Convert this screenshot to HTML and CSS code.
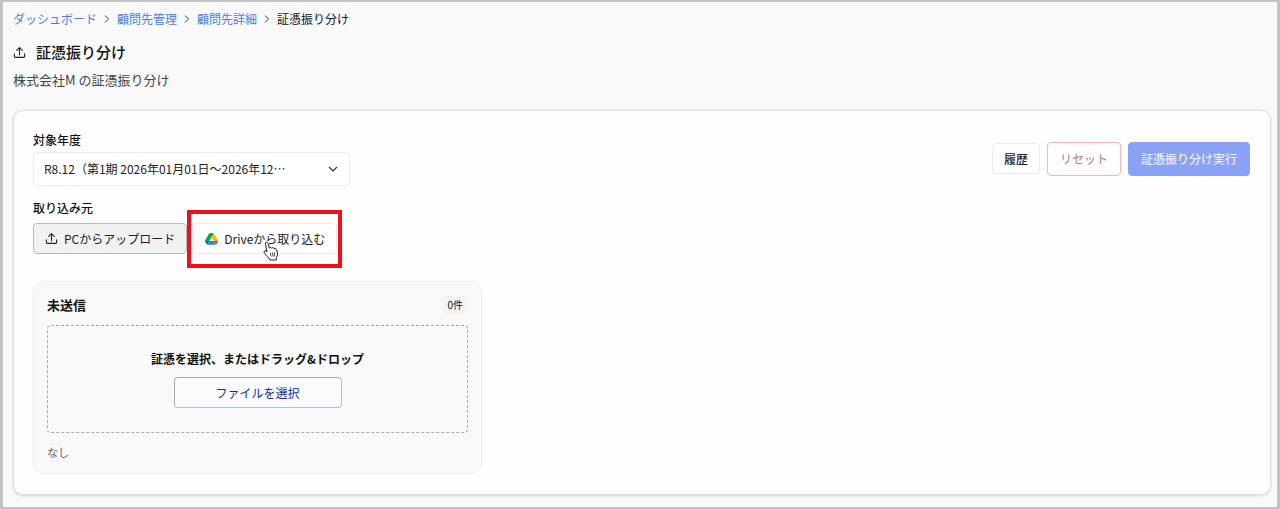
FILE: index.html
```html
<!DOCTYPE html>
<html lang="ja">

<head>
    <meta charset="UTF-8">
    <meta name="viewport" content="width=device-width, initial-scale=1.0">
    <title>証憑振り分け</title>
    <link rel="stylesheet" href="styles.css">
</head>

<body>
    <main class="page">
        <nav class="breadcrumb" aria-label="パンくずリスト">
            <a href="#">ダッシュボード</a>
            <svg class="sep" viewBox="0 0 8 8"><path d="M2 0.5 L5.5 4 L2 7.5"/></svg>
            <a href="#">顧問先管理</a>
            <svg class="sep" viewBox="0 0 8 8"><path d="M2 0.5 L5.5 4 L2 7.5"/></svg>
            <a href="#">顧問先詳細</a>
            <svg class="sep" viewBox="0 0 8 8"><path d="M2 0.5 L5.5 4 L2 7.5"/></svg>
            <span>証憑振り分け</span>
        </nav>

        <header class="page-header">
            <h1>
                <svg class="icon" viewBox="0 0 14 14"><path d="M7 9.5 V2 M4 4.8 L7 1.8 L10 4.8 M1.5 8.5 V11.2 Q1.5 12.2 2.5 12.2 H11.5 Q12.5 12.2 12.5 11.2 V8.5"/></svg>
                証憑振り分け
            </h1>
            <p>株式会社M の証憑振り分け</p>
        </header>

        <section class="card">
            <div class="toolbar">
                <div class="field">
                    <label for="fiscalYear">対象年度</label>
                    <select id="fiscalYear">
                        <option>R8.12（第1期 2026年01月01日〜2026年12…</option>
                    </select>
                </div>
                <div class="actions">
                    <button type="button" class="btn">履歴</button>
                    <button type="button" class="btn btn-reset">リセット</button>
                    <button type="button" class="btn btn-primary">証憑振り分け実行</button>
                </div>
            </div>

            <div class="source">
                <h2>取り込み元</h2>
                <div class="source-buttons">
                    <button type="button" class="btn btn-source active">
                        <svg class="icon" viewBox="0 0 14 14"><path d="M7 9.5 V2 M4 4.8 L7 1.8 L10 4.8 M1.5 8.5 V11.2 Q1.5 12.2 2.5 12.2 H11.5 Q12.5 12.2 12.5 11.2 V8.5"/></svg>
                        PCからアップロード
                    </button>
                    <div class="drive">
                        <button type="button" class="btn btn-source">
                            <svg class="drive-icon" viewBox="0 0 87 78">
                                <path fill="#0066da" d="m7 67 4 7c1 1 2 2 3 3l14-24H0c0 2 0 3 1 5z"/>
                                <path fill="#00ac47" d="M44 25 30 1c-1 1-3 2-3 3L1 48c-1 2-1 3-1 5h28z"/>
                                <path fill="#ea4335" d="M74 77c1-1 2-2 3-3l9-16c1-2 1-3 1-5H60l6 11z"/>
                                <path fill="#00832d" d="M44 25 57 1c-1-1-3-1-4-1H34c-1 0-3 0-4 1z"/>
                                <path fill="#2684fc" d="M60 53H28L14 77c1 1 3 1 4 1h51c2 0 3 0 5-1z"/>
                                <path fill="#ffba00" d="M73 27 61 4c-1-1-2-2-4-3L44 25l16 28h27c0-2 0-3-1-5z"/>
                            </svg>
                            Driveから取り込む
                        </button>
                        <span class="highlight"></span>
                        <svg class="pointer" viewBox="0 0 16 20">
                            <path fill="#fff" stroke="#222" stroke-linejoin="round" d="M4 11 L2.5 3 Q2.2 1 3.6 1 Q4.8 1 5.2 2.6 L6.3 7 Q7.3 5.8 8.6 7 Q10 6 11 7.4 Q13 6.6 13.6 8.6 L14.4 12 Q14.8 14.5 13.4 16.5 L13.2 19 H6.8 L6.2 17.3 Q3.5 15.5 1.2 11.6 Q0.6 10 2 9.8 Q3.2 9.8 4 11 Z"/>
                            <path fill="none" stroke="#222" stroke-width="0.8" d="M7.4 11.5 L8 15.5 M9.5 11.5 L10 15.5 M11.6 11.5 V15.5"/>
                        </svg>
                    </div>
                </div>
            </div>

            <section class="panel">
                <div class="panel-header">
                    <h3>未送信</h3>
                    <span class="count">0件</span>
                </div>
                <div class="dropzone">
                    <p>証憑を選択、またはドラッグ&amp;ドロップ</p>
                    <button type="button" class="btn btn-file">ファイルを選択</button>
                </div>
                <p class="empty">なし</p>
            </section>
        </section>
    </main>
</body>

</html>
```

FILE: styles.css
```css
* {
    box-sizing: border-box;
}

body {
    margin: 0;
    font-family: "Noto Sans CJK JP", sans-serif;
    font-size: 12px;
    line-height: 18px;
    color: #111;
    background: #f9f9f9;
}

h1, h2, h3, p {
    margin: 0;
}

.page {
    min-height: 100vh;
    padding: 8px 6px 12px 10px;
    border: solid #c3c3c3;
    border-width: 2px 3px;
}

.breadcrumb {
    display: flex;
    align-items: center;
    gap: 6px;
}

.breadcrumb a {
    color: #4a7fe8;
    text-decoration: none;
}

.sep {
    width: 8px;
    height: 8px;
    fill: none;
    stroke: #444;
}

.page-header {
    margin: 12px 0 20px;
}

h1 {
    display: flex;
    align-items: center;
    gap: 10px;
    font-size: 15px;
    line-height: 24px;
    font-weight: 500;
}

.page-header p {
    margin-top: 6px;
    font-size: 13px;
    line-height: 20px;
    color: #444;
}

.icon {
    width: 13px;
    height: 13px;
    fill: none;
    stroke: #222;
    stroke-width: 1.2;
    stroke-linecap: round;
    stroke-linejoin: round;
}

.card {
    padding: 20px 20px 20px 19px;
    background: #fefefe;
    border: 1px solid #dedede;
    border-radius: 10px;
    box-shadow: 0 1px 3px rgba(0, 0, 0, 0.15);
}

.toolbar {
    display: flex;
    justify-content: space-between;
    align-items: center;
}

.field {
    display: flex;
    flex-direction: column;
    gap: 3px;
    width: 317px;
}

.field label,
h2 {
    font-size: 12px;
    font-weight: 500;
}

select {
    appearance: none;
    height: 34px;
    padding: 0 30px 0 10px;
    font: inherit;
    color: #222;
    border: 1px solid #ebebeb;
    border-radius: 4px;
    background: #fff url("data:image/svg+xml,%3Csvg xmlns='http://www.w3.org/2000/svg' width='10' height='10' fill='none' stroke='%23333' stroke-width='1.2'%3E%3Cpath d='M1 3 L5 7 L9 3'/%3E%3C/svg%3E") no-repeat right 11px center;
}

.actions {
    display: flex;
    align-items: center;
    gap: 7px;
}

.btn {
    height: 31px;
    padding: 0 11px;
    font: inherit;
    font-weight: 500;
    color: #222;
    background: #fefefe;
    border: 1px solid #ebebeb;
    border-radius: 4px;
    cursor: pointer;
}

.btn-reset,
.btn-primary {
    height: 34px;
    padding: 0 12px;
}

.btn-reset {
    font-weight: 400;
    color: #b57888;
    border-color: #f5b5c0;
}

.btn-primary {
    color: #e9efff;
    background: #8aa2f6;
    border-color: #8aa2f6;
}

.source {
    display: flex;
    flex-direction: column;
    gap: 6px;
    margin-top: 13px;
}

.source-buttons {
    display: flex;
    gap: 6px;
}

.btn-source {
    display: flex;
    align-items: center;
    gap: 6px;
    font-weight: 400;
}

.active {
    background: #f1f1f1;
    border-color: #bbb;
}

.drive {
    position: relative;
}

.drive-icon {
    width: 13px;
    height: 12px;
}

.highlight {
    position: absolute;
    inset: -13px -5px -14px -6px;
    border: 4px solid #ee111b;
    pointer-events: none;
}

.pointer {
    position: absolute;
    top: 18px;
    left: 70px;
    width: 16px;
    height: 20px;
}

.panel {
    width: 449px;
    max-width: 100%;
    margin-top: 27px;
    padding: 14px 13px 12px;
    background: #f9f9f9;
    border: 1px solid #efefef;
    border-radius: 10px;
}

.panel-header {
    display: flex;
    justify-content: space-between;
    align-items: center;
}

h3 {
    font-size: 13px;
    font-weight: 700;
}

.count {
    padding: 0 5px;
    font-size: 10px;
    background: #f4f4f4;
    border-radius: 4px;
}

.dropzone {
    display: flex;
    flex-direction: column;
    align-items: center;
    gap: 9px;
    margin-top: 11px;
    padding: 24px;
    border: 1px dashed #aaa;
    border-radius: 4px;
}

.dropzone p {
    font-weight: 700;
}

.btn-file {
    width: 168px;
    font-weight: 400;
    color: #1c2a94;
    background: #fafbfd;
    border-color: #aaa #9fc3f5 #9fc3f5 #aaa;
}

.empty {
    margin-top: 10px;
    font-size: 11px;
    color: #666;
}
```
